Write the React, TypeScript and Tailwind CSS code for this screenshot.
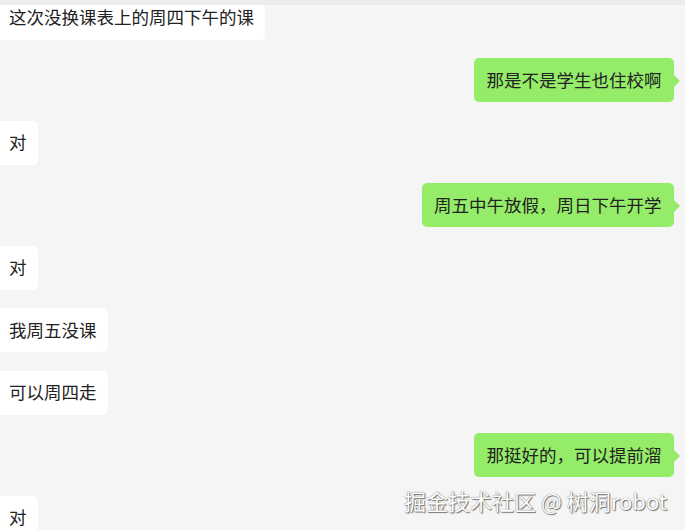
const font = { fontFamily: '"Noto Sans CJK SC", "Noto Sans", sans-serif' };

type Msg = { me: boolean; text: string };

const messages: Msg[] = [
  { me: false, text: "这次没换课表上的周四下午的课" },
  { me: true, text: "那是不是学生也住校啊" },
  { me: false, text: "对" },
  { me: true, text: "周五中午放假，周日下午开学" },
  { me: false, text: "对" },
  { me: false, text: "我周五没课" },
  { me: false, text: "可以周四走" },
  { me: true, text: "那挺好的，可以提前溜" },
  { me: false, text: "对" },
];

const Bubble = ({ msg }: { msg: Msg }) => {
  if (msg.me) {
    return (
      <div className="flex justify-end pr-[11px]">
        <div className="relative h-[44px] flex items-center px-[12.5px] rounded-[5px] bg-[#95ec69] text-[17.5px] text-[#222]">
          {msg.text}
          <span className="absolute right-[-6px] top-[17px] w-0 h-0 border-y-[6px] border-y-transparent border-l-[6px] border-l-[#95ec69]" />
        </div>
      </div>
    );
  }
  return (
    <div className="flex justify-start">
      <div className="h-[44px] flex items-center pl-[9px] pr-[11px] rounded-r-[5px] bg-white text-[17.5px] text-[#222]">
        {msg.text}
      </div>
    </div>
  );
};

const App = () => {
  return (
    <div className="relative w-[685px] h-[530px] overflow-hidden bg-[#f5f5f5] flex flex-col" style={font}>
      <div className="h-[5px] shrink-0 bg-[#ececec] z-10" />
      <div className="flex flex-col gap-[18.5px] mt-[-9.5px]">
        {messages.map((m, i) => (
          <Bubble key={i} msg={m} />
        ))}
      </div>
      <div
        className="absolute left-[404px] top-[485px] text-[22px] leading-[30px] text-white whitespace-nowrap"
        style={{ textShadow: "0 0 1px #555, 1px 1px 1px #777" }}
      >
        掘金技术社区 @ 树洞robot
      </div>
    </div>
  );
};

export default App;
